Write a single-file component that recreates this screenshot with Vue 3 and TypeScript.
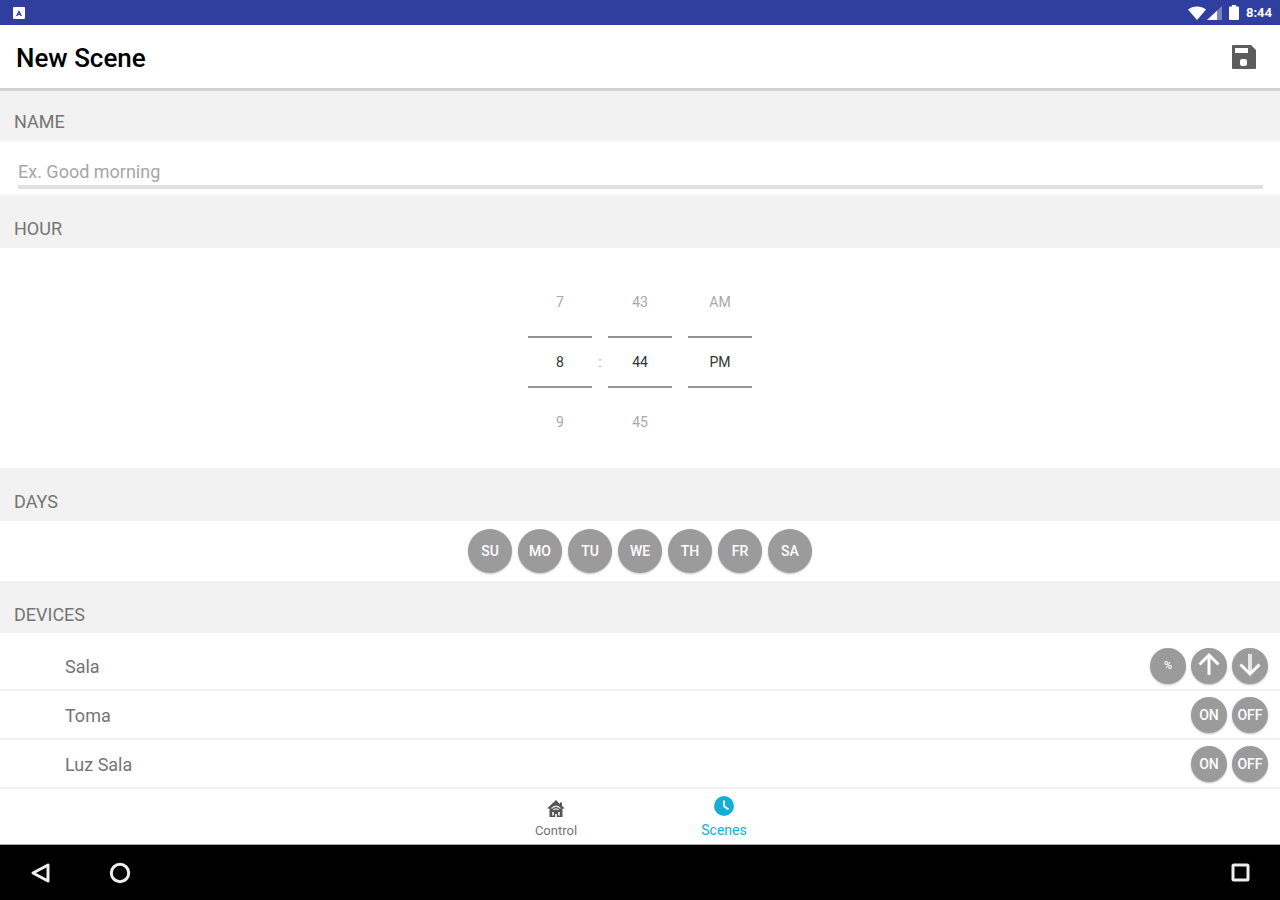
<script setup lang="ts">
import { ref } from 'vue'

interface Day { label: string; name: string; on: boolean }
interface Device { name: string; kind: 'blind' | 'switch' }

const sceneName = ref('')
const hour = ref('8')
const minute = ref('44')
const period = ref('PM')

const days = ref<Day[]>([
  { label: 'SU', name: 'Sunday', on: false },
  { label: 'MO', name: 'Monday', on: false },
  { label: 'TU', name: 'Tuesday', on: false },
  { label: 'WE', name: 'Wednesday', on: false },
  { label: 'TH', name: 'Thursday', on: false },
  { label: 'FR', name: 'Friday', on: false },
  { label: 'SA', name: 'Saturday', on: false },
])

const devices: Device[] = [
  { name: 'Sala', kind: 'blind' },
  { name: 'Toma', kind: 'switch' },
  { name: 'Luz Sala', kind: 'switch' },
]
</script>

<template>
  <div class="screen">
    <div class="status">
      <svg class="status-app" width="14" height="14" viewBox="0 0 14 14" aria-hidden="true">
        <rect x="1" y="1" width="12" height="12" rx="1" fill="#fff" />
        <path d="M4 10 7 4l3 6H8.500L7 7 5.500 10z" fill="#303f9f" />
        <path d="M5 8.500h4" stroke="#303f9f" />
      </svg>
      <div class="status-right">
        <svg width="18" height="14" viewBox="0 0 18 14" aria-hidden="true">
          <path d="M0 3.500C5-.6 13-.6 18 3.500L9 14z" fill="#fff" />
        </svg>
        <svg class="signal" width="15" height="14" viewBox="0 0 15 14" aria-hidden="true">
          <path d="M15 0v14H0z" fill="#fff" opacity=".35" />
          <path d="M10 4.700V14H0z" fill="#fff" />
        </svg>
        <svg class="battery" width="10" height="15" viewBox="0 0 10 15" aria-hidden="true">
          <path d="M3 0h4v1.500h2a1 1 0 0 1 1 1V14a1 1 0 0 1-1 1H1a1 1 0 0 1-1-1V2.500a1 1 0 0 1 1-1h2z" fill="#fff" />
        </svg>
        <span class="clock">8:44</span>
      </div>
    </div>

    <header class="appbar">
      <h1>New Scene</h1>
      <button class="save" type="button" aria-label="Save">
        <svg width="32" height="32" viewBox="0 0 32 32" aria-hidden="true">
          <path fill="#5c5c5c" fill-rule="evenodd" d="M5 4h18l5 5v18a1 1 0 0 1-1 1H5a1 1 0 0 1-1-1V5a1 1 0 0 1 1-1zM7 7v5h13V7zM14 18a2 2 0 0 0-2 2v3a2 2 0 0 0 2 2h3a2 2 0 0 0 2-2v-3a2 2 0 0 0-2-2z" />
        </svg>
      </button>
    </header>

    <main>
      <h2><label for="scene-name">NAME</label></h2>
      <div class="name">
        <input id="scene-name" v-model="sceneName" type="text" placeholder="Ex. Good morning" />
      </div>

      <h2>HOUR</h2>
      <div class="picker">
        <div class="wheel">
          <button type="button" @click="hour = '7'">7</button>
          <input v-model="hour" type="text" aria-label="Hour" />
          <button type="button" @click="hour = '9'">9</button>
        </div>
        <span class="colon">:</span>
        <div class="wheel">
          <button type="button" @click="minute = '43'">43</button>
          <input v-model="minute" type="text" aria-label="Minute" />
          <button type="button" @click="minute = '45'">45</button>
        </div>
        <div class="wheel last">
          <button type="button" @click="period = 'AM'">AM</button>
          <input v-model="period" type="text" aria-label="AM or PM" />
        </div>
      </div>

      <h2>DAYS</h2>
      <div class="days">
        <button
          v-for="day in days"
          :key="day.label"
          class="round day"
          :class="{ on: day.on }"
          type="button"
          :aria-label="day.name"
          :aria-pressed="day.on"
          @click="day.on = !day.on"
        >{{ day.label }}</button>
      </div>

      <h2 class="devices-title">DEVICES</h2>
      <ul class="devices">
        <li v-for="device in devices" :key="device.name">
          <span>{{ device.name }}</span>
          <div v-if="device.kind === 'blind'" class="actions">
            <button class="round percent" type="button">%</button>
            <button class="round" type="button" aria-label="Up">
              <svg width="24" height="28" viewBox="0 0 24 28" aria-hidden="true">
                <path d="M12 23V3M2.500 12.500 12 3l9.500 9.500" fill="none" stroke="#fff" stroke-width="3" />
              </svg>
            </button>
            <button class="round" type="button" aria-label="Down">
              <svg width="24" height="28" viewBox="0 0 24 28" aria-hidden="true">
                <path d="M12 2v20" fill="none" stroke="#e6e6e6" stroke-width="4" />
                <path d="M2.500 12.500 12 22l9.500-9.500" fill="none" stroke="#fff" stroke-width="3" />
              </svg>
            </button>
          </div>
          <div v-else class="actions">
            <button class="round" type="button">ON</button>
            <button class="round" type="button">OFF</button>
          </div>
        </li>
      </ul>
    </main>

    <nav class="tabs" aria-label="Main">
      <a href="#control">
        <svg width="20" height="20" viewBox="0 0 20 20" aria-hidden="true">
          <path d="M10 1 1 9.500h2.500V18h13V9.500H19L16 7V3.500h-2v1.800z" fill="#555" />
          <path d="M5.500 9.500c3-3 6-3 9 0M7.500 11c1.700-1.600 3.300-1.600 5 0" fill="none" stroke="#ddd" stroke-width="1.200" />
          <path d="M6 13h2v3.500H6zM12 13h2v3.500h-2zM9 15h2v3H9z" fill="#ddd" />
        </svg>
        <span>Control</span>
      </a>
      <a class="active" href="#scenes" aria-current="page">
        <svg width="20" height="20" viewBox="0 0 20 20" aria-hidden="true">
          <circle cx="10" cy="10" r="10" fill="#12b0d8" />
          <path d="M10 4.500V10l4.500 3.500" fill="none" stroke="#fff" stroke-width="2" />
        </svg>
        <span>Scenes</span>
      </a>
    </nav>

    <div class="system">
      <button type="button" aria-label="Back">
        <svg width="24" height="24" viewBox="0 0 24 24" aria-hidden="true">
          <path d="M5 12 20 4v16z" fill="none" stroke="#eee" stroke-width="3" stroke-linejoin="round" />
        </svg>
      </button>
      <button type="button" aria-label="Home">
        <svg width="24" height="24" viewBox="0 0 24 24" aria-hidden="true">
          <circle cx="12" cy="12" r="8.700" fill="none" stroke="#eee" stroke-width="3" />
        </svg>
      </button>
      <button class="recent" type="button" aria-label="Recent apps">
        <svg width="24" height="24" viewBox="0 0 24 24" aria-hidden="true">
          <rect x="5" y="4" width="15" height="15" rx="1" fill="none" stroke="#eee" stroke-width="3" />
        </svg>
      </button>
    </div>
  </div>
</template>

<style>
body {
  margin: 0;
}
</style>

<style scoped>
* {
  box-sizing: border-box;
}

.screen {
  display: flex;
  flex-direction: column;
  min-height: 100vh;
  background: #fff;
  color: #757575;
  font-family: Roboto, "Liberation Sans", sans-serif;
  font-size: 18px;
}

button,
input {
  margin: 0;
  padding: 0;
  border: 0;
  background: none;
  color: inherit;
  font: inherit;
}

button {
  cursor: pointer;
}

svg {
  display: block;
}

.status {
  display: flex;
  align-items: center;
  justify-content: space-between;
  height: 25px;
  padding: 0 8px 0 12px;
  background: #303f9f;
  color: #fff;
}

.status-right {
  display: flex;
  align-items: center;
}

.signal {
  margin-left: 1px;
}

.battery {
  margin-left: 7px;
}

.clock {
  margin-left: 7px;
  font-size: 13px;
  font-weight: 700;
}

.appbar {
  display: flex;
  align-items: center;
  justify-content: space-between;
  height: 66px;
  padding: 0 20px 0 16px;
  border-bottom: 3px solid #d2d2d2;
  background: #fff;
}

h1 {
  margin: 0;
  padding-top: 2px;
  color: #000;
  font-size: 26px;
  font-weight: 500;
}

main {
  flex: 1;
}

h2 {
  height: 53px;
  margin: 0;
  padding: 21px 14px 0;
  background: #f2f2f2;
  font-size: 18px;
  font-weight: 400;
  line-height: 26px;
}

.appbar + main > h2:first-child {
  height: 50px;
  padding-top: 18px;
}

.devices-title {
  height: 52px;
}

.name {
  height: 54px;
  padding: 16px 17px 0 18px;
}

.name input {
  display: block;
  width: 100%;
  height: 32px;
  border-bottom: 4px solid #e0e0e0;
  outline: 0;
}

.name input::placeholder {
  color: #a6a6a6;
  opacity: 1;
}

.picker {
  display: flex;
  justify-content: center;
  height: 220px;
  padding-top: 24px;
  color: #a8a8a8;
  font-size: 14px;
}

.wheel {
  display: flex;
  flex-direction: column;
  width: 64px;
}

.wheel button {
  height: 64px;
}

.wheel button:first-child {
  padding-bottom: 4px;
}

.wheel button:last-child {
  padding-top: 4px;
}

.wheel input {
  width: 100%;
  height: 52px;
  border-top: 2px solid #949494;
  border-bottom: 2px solid #949494;
  color: #333;
  text-align: center;
  outline: 0;
}

.wheel.last {
  margin-left: 16px;
}

.colon {
  width: 16px;
  padding-top: 64px;
  line-height: 52px;
  text-align: center;
}

.days {
  display: flex;
  justify-content: center;
  gap: 6px;
  height: 60px;
  padding-top: 8px;
}

.round {
  display: flex;
  align-items: center;
  justify-content: center;
  width: 36px;
  height: 36px;
  border-radius: 50%;
  background: #9b9b9b;
  box-shadow: 0 1px 2px rgba(0, 0, 0, 0.25);
  color: #fff;
  font-size: 14px;
  font-weight: 500;
}

.round.day {
  width: 44px;
  height: 44px;
}

.round.on {
  background: #12b0d8;
}

.round.percent {
  font-size: 11px;
}

.devices {
  margin: 0;
  padding: 9px 0 0;
  list-style: none;
}

.devices li {
  display: flex;
  align-items: center;
  justify-content: space-between;
  height: 49px;
  padding: 0 12px 0 65px;
  border-bottom: 2px solid #f0f0f0;
}

.devices li > span {
  padding-top: 1px;
}

.actions {
  display: flex;
  gap: 5px;
}

.tabs {
  display: flex;
  justify-content: center;
  height: 56px;
  border-bottom: 1px solid #aaa;
  font-size: 13px;
}

.tabs a {
  display: flex;
  flex-direction: column;
  align-items: center;
  gap: 4px;
  width: 168px;
  padding-top: 10px;
  color: inherit;
  line-height: 16px;
  text-decoration: none;
}

.tabs a.active {
  gap: 6px;
  padding-top: 7px;
  color: #12b0d8;
  font-size: 14px;
}

.system {
  display: flex;
  align-items: center;
  gap: 56px;
  height: 55px;
  padding: 0 28px;
  background: #000;
}

.recent {
  margin-left: auto;
}
</style>
